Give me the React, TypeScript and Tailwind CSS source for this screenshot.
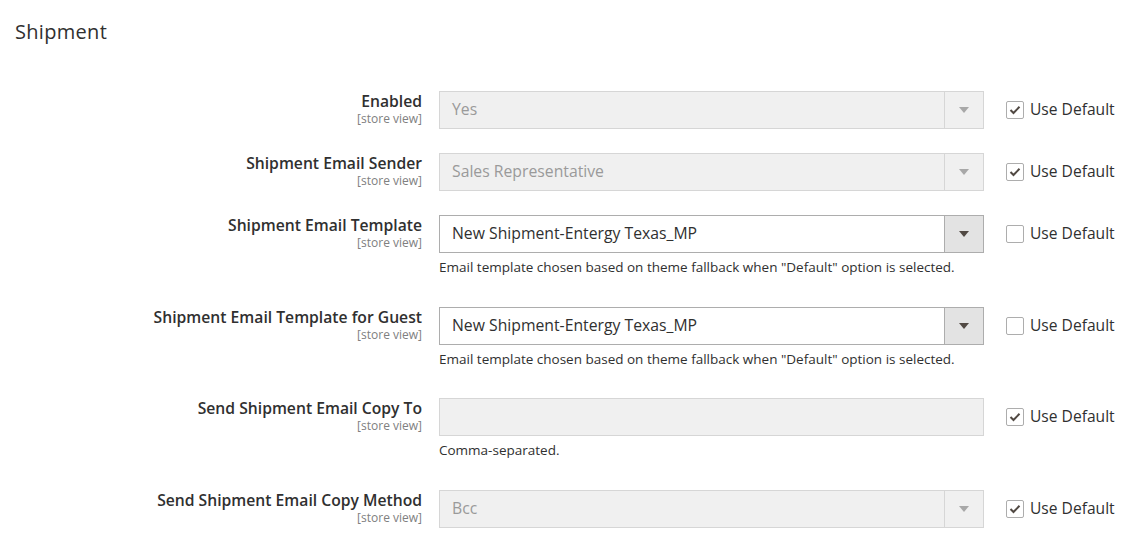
import React from "react";

type Row = {
  label: string;
  kind: "select" | "text";
  value: string;
  disabled: boolean;
  note?: string;
  height: string;
};

const rows: Row[] = [
  {
    label: "Enabled",
    kind: "select",
    value: "Yes",
    disabled: true,
    height: "h-[62px]",
  },
  {
    label: "Shipment Email Sender",
    kind: "select",
    value: "Sales Representative",
    disabled: true,
    height: "h-[62px]",
  },
  {
    label: "Shipment Email Template",
    kind: "select",
    value: "New Shipment-Entergy Texas_MP",
    disabled: false,
    note: 'Email template chosen based on theme fallback when "Default" option is selected.',
    height: "h-[92px]",
  },
  {
    label: "Shipment Email Template for Guest",
    kind: "select",
    value: "New Shipment-Entergy Texas_MP",
    disabled: false,
    note: 'Email template chosen based on theme fallback when "Default" option is selected.',
    height: "h-[91px]",
  },
  {
    label: "Send Shipment Email Copy To",
    kind: "text",
    value: "",
    disabled: true,
    note: "Comma-separated.",
    height: "h-[92px]",
  },
  {
    label: "Send Shipment Email Copy Method",
    kind: "select",
    value: "Bcc",
    disabled: true,
    height: "h-[62px]",
  },
];

function Field({ row }: { row: Row }) {
  const box = row.disabled
    ? "border-[#d6d6d6] bg-[#f0f0f0] text-[#9a9a9a]"
    : "border-[#adadad] bg-white text-[#303030]";

  return (
    <div className={`flex h-[38px] w-[545px] items-stretch border ${box}`}>
      <div className="flex flex-1 items-center pl-[12px] text-[15.75px]">
        {row.value}
      </div>
      {row.kind === "select" && (
        <div
          className={`flex w-[39px] items-center justify-center border-l ${
            row.disabled
              ? "border-[#d6d6d6] bg-[#f0f0f0]"
              : "border-[#adadad] bg-[#e3e3e3]"
          }`}
        >
          <svg width="10" height="6" viewBox="0 0 10 6">
            <path
              d="M0 0 L10 0 L5 6 Z"
              fill={row.disabled ? "#a8a8a8" : "#514943"}
            />
          </svg>
        </div>
      )}
    </div>
  );
}

function UseDefault({ checked }: { checked: boolean }) {
  return (
    <label className="flex items-center gap-[6px] text-[15.6px] text-[#303030]">
      <span className="flex h-[18px] w-[18px] items-center justify-center rounded-[2px] border border-[#adadad] bg-white">
        {checked && (
          <svg width="12" height="10" viewBox="0 0 12 10">
            <path
              d="M1.5 5 L4.5 8 L10.5 1.8"
              fill="none"
              stroke="#514943"
              strokeWidth="2"
            />
          </svg>
        )}
      </span>
      Use Default
    </label>
  );
}

export default function App() {
  return (
    <div
      className="min-h-screen bg-white text-[#303030]"
      style={{ fontFamily: '"Open Sans", "Noto Sans", sans-serif' }}
    >
      <div className="px-[15px] pt-[18px]">
        <h2 className="text-[20px] leading-[28px] font-normal tracking-[0.3px] text-[#303030]">
          Shipment
        </h2>
      </div>

      <div className="mt-[45px]">
        {rows.map((row) => (
          <div key={row.label} className={`flex ${row.height}`}>
            <div className="w-[423px] pr-[1px] text-right">
              <div className="text-[15.7px] leading-[20px] font-semibold text-[#303030]">
                {row.label}
              </div>
              <div className="text-[12px] leading-[15px] text-[#808080]">
                [store view]
              </div>
            </div>

            <div className="ml-[16px] flex flex-col">
              <Field row={row} />
              {row.note && (
                <div className="mt-[4px] text-[13.5px] leading-[20px] text-[#303030]">
                  {row.note}
                </div>
              )}
            </div>

            <div className="ml-[22px] flex h-[38px] items-center">
              <UseDefault checked={row.disabled} />
            </div>
          </div>
        ))}
      </div>
    </div>
  );
}
